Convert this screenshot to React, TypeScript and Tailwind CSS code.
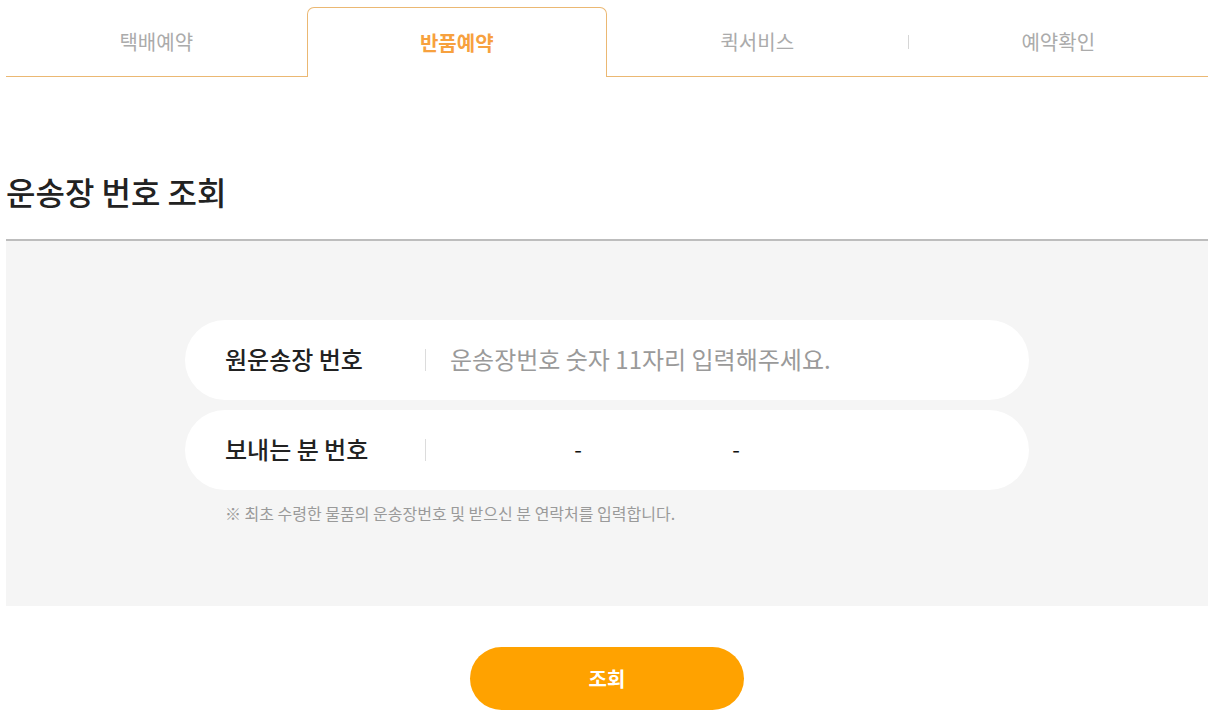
import React from "react";

const font = { fontFamily: '"Noto Sans CJK KR", "Noto Sans", sans-serif' };

export default function App() {
  const tabs = ["택배예약", "반품예약", "퀵서비스", "예약확인"];
  return (
    <div className="bg-white w-[1214px] min-h-[728px] px-[6px]" style={font}>
      {/* Tabs */}
      <div className="grid grid-cols-4 pt-[7px]">
        {tabs.map((t, i) => {
          const active = i === 1;
          return (
            <div
              key={t}
              className={
                active
                  ? "h-[70px] flex items-center justify-center border border-b-0 border-[#ebb873] rounded-t-[7px] text-[20px] font-bold text-[#f7a13e]"
                  : "h-[70px] flex items-center border-b border-[#ebb873] text-[20px] text-[#ababab]"
              }
            >
              {active ? (
                t
              ) : (
                <>
                  {i === 3 && <span className="w-px h-[14px] bg-[#d6d6d6]" />}
                  <span className="flex-1 text-center">{t}</span>
                </>
              )}
            </div>
          );
        })}
      </div>

      {/* Heading */}
      <h1 className="mt-[92px] text-[32px] leading-[45px] font-medium text-[#222]">
        운송장 번호 조회
      </h1>
      <div className="mt-[25px] h-[2px] bg-[#bdbdbd]" />

      {/* Gray box */}
      <div className="bg-[#f5f5f5] h-[365px] pt-[79px]">
        <div className="w-[844px] mx-auto flex flex-col gap-[10px]">
          <div className="h-[80px] bg-white rounded-full flex items-center pl-[40px]">
            <span className="w-[200px] text-[24px] font-medium text-[#222] leading-[32px] -mt-[2px]">원운송장 번호</span>
            <span className="w-px h-[22px] bg-[#dcdcdc]" />
            <span className="pl-[24px] text-[24px] text-[#9a9a9a] leading-[32px] -mt-[2px]">운송장번호 숫자 11자리 입력해주세요.</span>
          </div>
          <div className="h-[80px] bg-white rounded-full flex items-center pl-[40px]">
            <span className="w-[200px] text-[24px] font-medium text-[#222] leading-[32px] -mt-[2px]">보내는 분 번호</span>
            <span className="w-px h-[22px] bg-[#dcdcdc]" />
            <span className="w-[146px]" />
            <span className="w-[12px] text-center text-[22px] text-[#111] leading-[32px] -mt-[4px]">-</span>
            <span className="w-[146px]" />
            <span className="w-[12px] text-center text-[22px] text-[#111] leading-[32px] -mt-[4px]">-</span>
          </div>
          <p className="pl-[40px] mt-[1px] text-[16px] leading-[24px] text-[#9a9a9a]">
            ※ 최초 수령한 물품의 운송장번호 및 받으신 분 연락처를 입력합니다.
          </p>
        </div>
      </div>

      {/* Button */}
      <div className="flex justify-center mt-[41px]">
        <button className="w-[274px] h-[63px] rounded-full bg-[#ffa200] text-white text-[20px] font-bold">
          조회
        </button>
      </div>
    </div>
  );
}
